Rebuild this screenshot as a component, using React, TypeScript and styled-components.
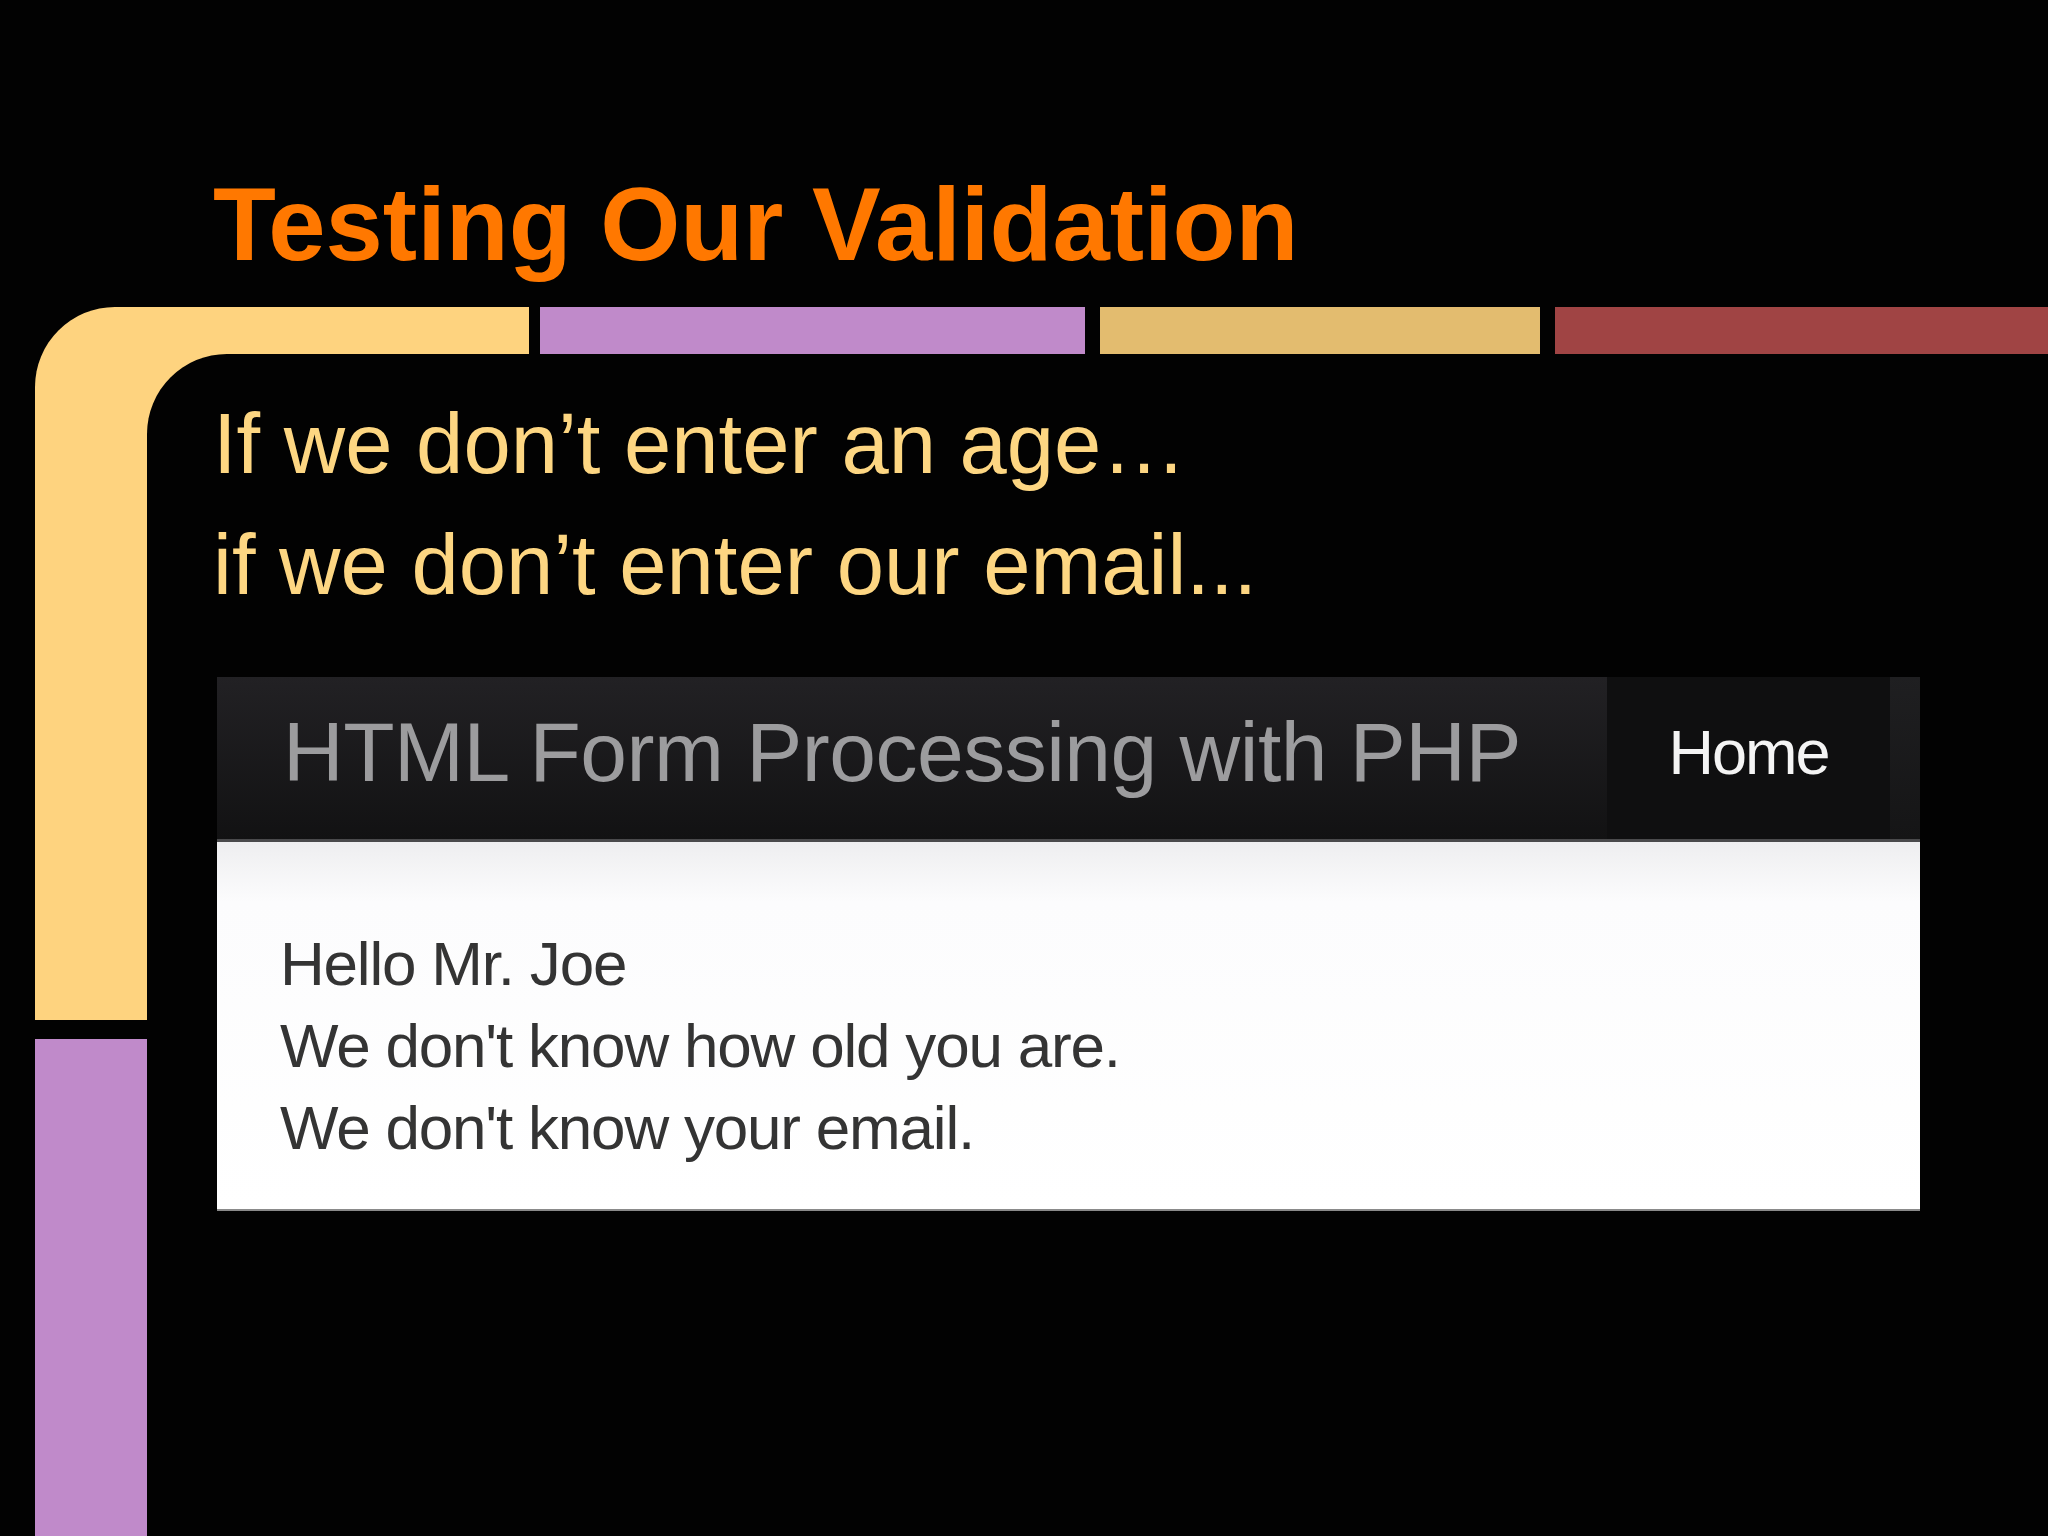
import styled, { createGlobalStyle } from "styled-components";

const GlobalStyle = createGlobalStyle`
  html, body {
    margin: 0;
    padding: 0;
    background: #000;
  }
  body {
    font-family: "Liberation Sans", Arial, sans-serif;
  }
`;

const Slide = styled.div`
  width: 2048px;
  height: 1536px;
  background: #020202;
  display: flex;
  flex-direction: column;
  overflow: hidden;
`;

const Header = styled.header`
  height: 307px;
  box-sizing: border-box;
  padding: 163px 0 0 213px;
`;

const Title = styled.h1`
  margin: 0;
  font-size: 103px;
  line-height: 1.2;
  font-weight: 700;
  color: #ff7800;
`;

const Frame = styled.div`
  flex: 1;
  display: grid;
  grid-template-columns: 112px 1fr;
  grid-template-rows: 47px 1fr;
  padding-left: 35px;
`;

const LeftRail = styled.div`
  grid-row: 1 / span 2;
  grid-column: 1;
  display: flex;
  flex-direction: column;
  gap: 19px;
`;

const RailPiece = styled.div<{ $color: string; $rounded?: boolean; $height?: number }>`
  background: ${(p) => p.$color};
  ${(p) => (p.$height ? `height: ${p.$height}px;` : "flex: 1;")}
  ${(p) => (p.$rounded ? "border-top-left-radius: 80px;" : "")}
`;

const BarRow = styled.div`
  grid-row: 1;
  grid-column: 2;
  display: flex;
`;

const Bar = styled.div<{ $color: string; $width?: number; $gap?: number }>`
  background: ${(p) => p.$color};
  margin-left: ${(p) => p.$gap ?? 0}px;
  ${(p) => (p.$width ? `width: ${p.$width}px;` : "flex: 1;")}
`;

const CornerWrap = styled.div`
  grid-row: 2;
  grid-column: 2;
  background: linear-gradient(#fed37f, #fed37f) top left / 80px 80px no-repeat;
  display: flex;
`;

const Content = styled.main`
  flex: 1;
  background: #020202;
  border-top-left-radius: 80px;
  padding: 29px 0 0 66px;
`;

const Point = styled.p`
  margin: 0;
  font-size: 85px;
  line-height: 121px;
  color: #fdd682;
`;

const Shot = styled.section`
  margin: 52px 0 0 4px;
  width: 1703px;
  display: flex;
  flex-direction: column;
`;

const NavBar = styled.nav`
  height: 162px;
  display: flex;
  background: linear-gradient(#222124, #121213);
  border-bottom: 3px solid #4a4a4c;
`;

const Brand = styled.div`
  flex: 1;
  display: flex;
  align-items: center;
  padding: 0 0 11px 66px;
  font-size: 84px;
  letter-spacing: -0.5px;
  color: #9c9c9e;
`;

const NavLink = styled.div`
  width: 283px;
  display: flex;
  align-items: center;
  justify-content: center;
  padding-bottom: 12px;
  box-sizing: border-box;
  background: #0f0f10;
  font-size: 63px;
  letter-spacing: -2px;
  color: #f4f4f4;
`;

const NavTail = styled.div`
  width: 30px;
  background: linear-gradient(#1f1f21, #151516);
`;

const Panel = styled.div`
  background: linear-gradient(#eeeef0, #fcfcfd 60px, #ffffff);
  padding: 81px 0 40px 63px;
  border-bottom: 2px solid #8a8a8a;
`;

const Line = styled.div`
  font-size: 62px;
  line-height: 82px;
  letter-spacing: -1.2px;
  color: #343434;
`;

const lines = [
  "Hello Mr. Joe",
  "We don't know how old you are.",
  "We don't know your email.",
];

export default function App() {
  return (
    <>
      <GlobalStyle />
      <Slide>
        <Header>
          <Title>Testing Our Validation</Title>
        </Header>
        <Frame>
          <LeftRail>
            <RailPiece $color="#fed37f" $rounded $height={713} />
            <RailPiece $color="#c08aca" />
          </LeftRail>
          <BarRow>
            <Bar $color="#fed37f" $width={382} />
            <Bar $color="#c08aca" $width={545} $gap={11} />
            <Bar $color="#e3bc6f" $width={440} $gap={15} />
            <Bar $color="#a04444" $gap={15} />
          </BarRow>
          <CornerWrap>
            <Content>
              <Point>If we don’t enter an age…</Point>
              <Point>if we don’t enter our email...</Point>
              <Shot>
                <NavBar>
                  <Brand>HTML Form Processing with PHP</Brand>
                  <NavLink>Home</NavLink>
                  <NavTail />
                </NavBar>
                <Panel>
                  {lines.map((l) => (
                    <Line key={l}>{l}</Line>
                  ))}
                </Panel>
              </Shot>
            </Content>
          </CornerWrap>
        </Frame>
      </Slide>
    </>
  );
}
